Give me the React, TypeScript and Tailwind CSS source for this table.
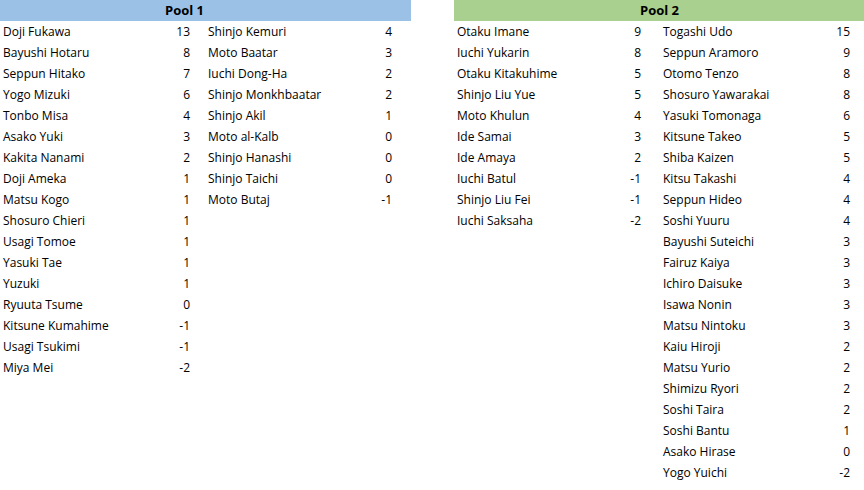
import React from 'react';

type Entry = [string, number];

const pool1Left: Entry[] = [
    ['Doji Fukawa', 13],
    ['Bayushi Hotaru', 8],
    ['Seppun Hitako', 7],
    ['Yogo Mizuki', 6],
    ['Tonbo Misa', 4],
    ['Asako Yuki', 3],
    ['Kakita Nanami', 2],
    ['Doji Ameka', 1],
    ['Matsu Kogo', 1],
    ['Shosuro Chieri', 1],
    ['Usagi Tomoe', 1],
    ['Yasuki Tae', 1],
    ['Yuzuki', 1],
    ['Ryuuta Tsume', 0],
    ['Kitsune Kumahime', -1],
    ['Usagi Tsukimi', -1],
    ['Miya Mei', -2],
];

const pool1Right: Entry[] = [
    ['Shinjo Kemuri', 4],
    ['Moto Baatar', 3],
    ['Iuchi Dong-Ha', 2],
    ['Shinjo Monkhbaatar', 2],
    ['Shinjo Akil', 1],
    ['Moto al-Kalb', 0],
    ['Shinjo Hanashi', 0],
    ['Shinjo Taichi', 0],
    ['Moto Butaj', -1],
];

const pool2Left: Entry[] = [
    ['Otaku Imane', 9],
    ['Iuchi Yukarin', 8],
    ['Otaku Kitakuhime', 5],
    ['Shinjo Liu Yue', 5],
    ['Moto Khulun', 4],
    ['Ide Samai', 3],
    ['Ide Amaya', 2],
    ['Iuchi Batul', -1],
    ['Shinjo Liu Fei', -1],
    ['Iuchi Saksaha', -2],
];

const pool2Right: Entry[] = [
    ['Togashi Udo', 15],
    ['Seppun Aramoro', 9],
    ['Otomo Tenzo', 8],
    ['Shosuro Yawarakai', 8],
    ['Yasuki Tomonaga', 6],
    ['Kitsune Takeo', 5],
    ['Shiba Kaizen', 5],
    ['Kitsu Takashi', 4],
    ['Seppun Hideo', 4],
    ['Soshi Yuuru', 4],
    ['Bayushi Suteichi', 3],
    ['Fairuz Kaiya', 3],
    ['Ichiro Daisuke', 3],
    ['Isawa Nonin', 3],
    ['Matsu Nintoku', 3],
    ['Kaiu Hiroji', 2],
    ['Matsu Yurio', 2],
    ['Shimizu Ryori', 2],
    ['Soshi Taira', 2],
    ['Soshi Bantu', 1],
    ['Asako Hirase', 0],
    ['Yogo Yuichi', -2],
];

const Column = ({ rows, className }: { rows: Entry[]; className: string }) => (
    <div className={className}>
        {rows.map(([name, score]) => (
            <div key={name} className="flex justify-between h-[21px] leading-[21px]">
                <span>{name}</span>
                <span>{score}</span>
            </div>
        ))}
    </div>
);

const App = () => {
    return (
        <div
            className="w-[864px] h-[490px] overflow-hidden bg-white text-black text-[12px] flex"
            style={{ fontFamily: '"Open Sans", sans-serif' }}
        >
            <div className="w-[411px] shrink-0">
                <div className="h-[21px] leading-[21px] bg-[#9bc2e6] font-bold text-[13px] pl-[165px]">Pool 1</div>
                <div className="flex">
                    <Column rows={pool1Left} className="w-[205px] pl-[3px] pr-[15px]" />
                    <Column rows={pool1Right} className="w-[206px] pl-[3px] pr-[19px]" />
                </div>
            </div>
            <div className="w-[43px] shrink-0" />
            <div className="w-[410px] shrink-0">
                <div className="h-[21px] leading-[21px] bg-[#a9d08e] font-bold text-[13px] text-center pl-[1px]">Pool 2</div>
                <div className="flex">
                    <Column rows={pool2Left} className="w-[206px] pl-[3px] pr-[19px]" />
                    <Column rows={pool2Right} className="w-[204px] pl-[3px] pr-[14px]" />
                </div>
            </div>
        </div>
    );
};

export default App;
